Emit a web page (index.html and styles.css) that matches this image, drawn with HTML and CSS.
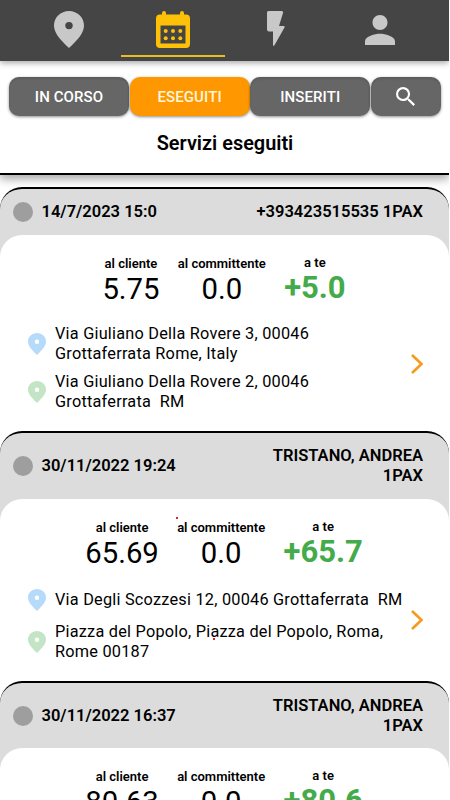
FILE: index.html
```html
<!DOCTYPE html>
<html lang="it">
<head>
    <meta charset="UTF-8">
    <meta name="viewport" content="width=device-width, initial-scale=1.0">
    <title>Servizi eseguiti</title>
    <link rel="stylesheet" href="styles.css">
</head>
<body>
    <svg class="sprite">
        <symbol id="pin" viewBox="5 2 14 20" preserveAspectRatio="none">
            <path fill-rule="evenodd" d="M12 2C8.100 2 5 5.500 5 9.800c0 3.700 2.400 7.200 7 12.200 4.600-5 7-8.500 7-12.200C19 5.500 15.900 2 12 2zm0 5.900a1.750 2 0 1 1 0 4 1.750 2 0 0 1 0-4z"/>
        </symbol>
    </svg>

    <div class="app">
        <!-- Barra principale -->
        <nav class="topbar">
            <a class="tab">
                <svg class="tab-pin"><use href="#pin"/></svg>
            </a>
            <a class="tab active">
                <svg class="tab-calendar" viewBox="0 0 34 37">
                    <path fill-rule="evenodd" d="M6 3.500V2a2 2 0 0 1 4 0v1.500h14V2a2 2 0 0 1 4 0v1.500h2a4 4 0 0 1 4 4V33a4 4 0 0 1-4 4H4a4 4 0 0 1-4-4V7.500a4 4 0 0 1 4-4zM4.500 14.500v18h25v-18z"/>
                    <circle cx="9.700" cy="20" r="2"/><circle cx="17" cy="20" r="2"/><circle cx="24.300" cy="20" r="2"/>
                    <circle cx="9.700" cy="27.300" r="2"/><circle cx="17" cy="27.300" r="2"/><circle cx="24.300" cy="27.300" r="2"/>
                </svg>
            </a>
            <a class="tab">
                <svg class="tab-flash" viewBox="0 0 18 35">
                    <path d="M1.500 0h13q2 0 1.500 2L12 15h4.500q1.800 0 1 1.500L7.600 34Q6 36 6 33.500V20.500H2q-2 0-2-2V1.500Q0 0 1.500 0z"/>
                </svg>
            </a>
            <a class="tab">
                <svg class="tab-person" viewBox="4 4 16 16">
                    <path d="M12 12c2.210 0 4-1.790 4-4s-1.790-4-4-4-4 1.790-4 4 1.790 4 4 4zm0 2c-2.670 0-8 1.340-8 4v2h16v-2c0-2.660-5.330-4-8-4z"/>
                </svg>
            </a>
        </nav>

        <!-- Filtri -->
        <header class="filters">
            <div class="button-row">
                <button class="btn">IN CORSO</button>
                <button class="btn selected">ESEGUITI</button>
                <button class="btn">INSERITI</button>
                <button class="btn btn-search">
                    <svg viewBox="3 3 17.500 17.500">
                        <path d="M15.500 14h-.79l-.28-.27A6.471 6.471 0 0 0 16 9.500 6.500 6.500 0 1 0 9.500 16c1.610 0 3.090-.59 4.230-1.570l.27.28v.79l5 4.990L20.490 19l-4.990-5zm-6 0C7.010 14 5 11.990 5 9.500S7.010 5 9.500 5 14 7.010 14 9.500 11.990 14 9.500 14z"/>
                    </svg>
                </button>
            </div>
            <h1>Servizi eseguiti</h1>
        </header>

        <!-- Elenco servizi -->
        <main class="list">
            <article class="card">
                <div class="card-head">
                    <span class="status"></span>
                    <span class="date">14/7/2023 15:0</span>
                    <span class="client">+393423515535 1PAX</span>
                </div>
                <div class="card-body">
                    <div class="prices">
                        <div class="price"><span class="label">al cliente</span><span class="value">5.75</span></div>
                        <div class="price"><span class="label">al committente</span><span class="value">0.0</span></div>
                        <div class="price gain"><span class="label">a te</span><span class="value">+5.0</span></div>
                    </div>
                    <div class="route">
                        <div class="stops">
                            <div class="stop"><svg class="from"><use href="#pin"/></svg><p>Via Giuliano Della Rovere 3, 00046<br>Grottaferrata Rome, Italy</p></div>
                            <div class="stop"><svg class="to"><use href="#pin"/></svg><p>Via Giuliano Della Rovere 2, 00046<br>Grottaferrata&nbsp; RM</p></div>
                        </div>
                        <svg class="chevron" viewBox="0 0 14 22"><path d="M2 2l9.500 9L2 20"/></svg>
                    </div>
                </div>
            </article>

            <article class="card">
                <div class="card-head">
                    <span class="status"></span>
                    <span class="date">30/11/2022 19:24</span>
                    <span class="client">TRISTANO, ANDREA<br>1PAX</span>
                </div>
                <div class="card-body">
                    <div class="prices">
                        <div class="price"><span class="label">al cliente</span><span class="value">65.69</span></div>
                        <div class="price"><span class="label">al committente<i class="dot dot-label"></i></span><span class="value">0.0</span></div>
                        <div class="price gain"><span class="label">a te</span><span class="value">+65.7</span></div>
                    </div>
                    <div class="route">
                        <div class="stops">
                            <div class="stop"><svg class="from"><use href="#pin"/></svg><p>Via Degli Scozzesi 12, 00046 Grottaferrata&nbsp; RM</p></div>
                            <div class="stop"><svg class="to"><use href="#pin"/></svg><p>Piazza del Popolo, Piazza del Popolo, Roma,<br>Rome 00187<i class="dot dot-stop"></i></p></div>
                        </div>
                        <svg class="chevron" viewBox="0 0 14 22"><path d="M2 2l9.500 9L2 20"/></svg>
                    </div>
                </div>
            </article>

            <article class="card">
                <div class="card-head">
                    <span class="status"></span>
                    <span class="date">30/11/2022 16:37</span>
                    <span class="client">TRISTANO, ANDREA<br>1PAX</span>
                </div>
                <div class="card-body">
                    <div class="prices">
                        <div class="price"><span class="label">al cliente</span><span class="value">80.63</span></div>
                        <div class="price"><span class="label">al committente</span><span class="value">0.0</span></div>
                        <div class="price gain"><span class="label">a te</span><span class="value">+80.6</span></div>
                    </div>
                </div>
            </article>
        </main>
    </div>
</body>
</html>
```
FILE: styles.css
```css
:root {
    --color-bar: #454545;
    --color-button: #666666;
    --color-orange: #ff9800;
    --color-yellow: #ffc107;
    --color-green: #43ab4a;
    --color-head: #dcdcdc;
}

* {
    box-sizing: border-box;
}

body {
    margin: 0;
    background: #fff;
    color: #000;
    font-family: Roboto, sans-serif;
    overflow: hidden;
}

.sprite {
    display: none;
}

.app {
    width: 449px;
    height: 800px;
    overflow: hidden;
    display: flex;
    flex-direction: column;
}

/* --- Barra principale --- */
.topbar {
    flex: none;
    height: 61px;
    padding: 0 17.5px;
    display: flex;
    background: var(--color-bar);
    box-shadow: 0 2px 6px rgba(0,0,0,0.35);
    z-index: 2;
}

.tab {
    flex: 1;
    height: 57px;
    padding-top: 2px;
    display: flex;
    align-items: center;
    justify-content: center;
    border-bottom: 2px solid transparent;
    fill: #c8c8c8;
}

.tab.active {
    border-color: #e9bb24;
    fill: var(--color-yellow);
}

.tab-pin {
    width: 30px;
    height: 37px;
    margin-top: 2px;
}

.tab-calendar {
    width: 34px;
    height: 37px;
    margin-top: 2px;
}

.tab-flash {
    width: 18px;
    height: 35px;
}

.tab-person {
    width: 30px;
    height: 30px;
    margin-top: 3px;
}

/* --- Filtri --- */
.filters {
    flex: none;
    height: 114px;
    padding: 16px 8px 0 9px;
    border-bottom: 2px solid #000;
    background: #fff;
    box-shadow: 0 4px 9px rgba(0,0,0,0.35);
    z-index: 1;
}

.button-row {
    display: flex;
    gap: 0.6px;
}

.btn {
    width: 120px;
    height: 39px;
    padding: 0;
    border: 0;
    border-radius: 10px;
    background: var(--color-button);
    color: #fff;
    font: 500 15px Roboto, sans-serif;
    letter-spacing: 0.1px;
    box-shadow: 0 1px 3px rgba(0,0,0,0.45), inset 0 2px 2px rgba(0,0,0,0.1);
}

.btn.selected {
    background: var(--color-orange);
    color: #fff6dc;
    box-shadow: 0 1px 3px rgba(0,0,0,0.45);
}

.btn-search {
    width: 70px;
    padding-right: 1px;
    display: flex;
    align-items: center;
    justify-content: center;
}

.btn-search svg {
    width: 19px;
    height: 19px;
    fill: #fff;
}

h1 {
    margin: 16px 0 0;
    font-size: 19.9px;
    font-weight: 600;
    line-height: 24px;
    text-align: center;
}

/* --- Elenco servizi --- */
.list {
    padding-top: 12px;
}

.card {
    border-top: 2px solid #000;
    border-radius: 22px 22px 0 0;
    background: var(--color-head);
}

.card-head {
    padding: 13px 26px 13px 13px;
    display: flex;
    align-items: center;
    font-size: 16.5px;
    font-weight: 600;
    line-height: 19.7px;
}

.status {
    width: 20px;
    height: 20px;
    margin-right: 8.5px;
    border-radius: 50%;
    background: #9e9e9e;
}

.client {
    margin-left: auto;
    text-align: right;
}

.card-body {
    padding: 21px 26px 20px 28px;
    border-radius: 22px 22px 0 0;
    background: #fff;
}

.prices {
    height: 68px;
    margin: 0 -25px 0 -28px;
    display: flex;
    justify-content: center;
    gap: 18.3px;
}

.price {
    display: flex;
    flex-direction: column;
    align-items: center;
}

.label {
    position: relative;
    font-size: 13px;
    font-weight: 600;
    line-height: 16px;
}

.value {
    font-size: 29.3px;
    line-height: 34px;
}

.gain .label {
    margin-top: -1px;
}

.gain .value {
    color: var(--color-green);
    font-size: 31px;
    font-weight: 700;
}

.route {
    display: flex;
    align-items: center;
}

.stops {
    flex: 1;
    display: flex;
    flex-direction: column;
    gap: 9.3px;
}

.stop {
    min-height: 25px;
    display: flex;
    align-items: center;
}

.stop svg {
    flex: none;
    width: 18px;
    height: 22px;
    margin-right: 9px;
}

.stop p {
    position: relative;
    margin: 0;
    font-size: 16.3px;
    line-height: 19.5px;
    letter-spacing: 0.23px;
    white-space: nowrap;
}

.from {
    fill: #b5dafa;
}

.to {
    fill: #c3e5c5;
}

.chevron {
    flex: none;
    width: 14px;
    height: 22px;
    margin: 0 -1px 8px 0;
    fill: none;
    stroke: #f79a1c;
    stroke-width: 2.6;
}

/* punti rossi sopra il testo */
.dot {
    position: absolute;
    width: 2px;
    height: 2px;
    background: #e02030;
}

.dot-label {
    left: -1px;
    top: -3px;
}

.dot-stop {
    left: 158px;
    top: 16px;
}
```
